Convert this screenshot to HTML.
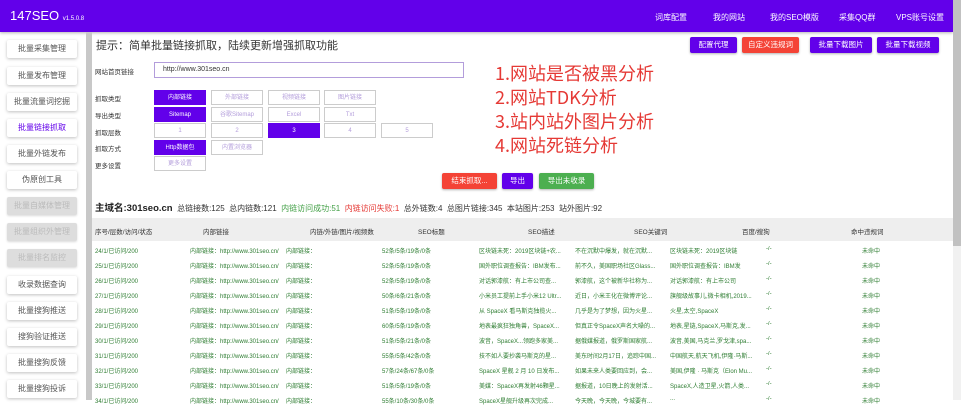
<!DOCTYPE html>
<html><head><meta charset="utf-8"><style>
*{margin:0;padding:0;box-sizing:border-box}
body{width:961px;height:400px;overflow:hidden;background:#fff;font-family:"Liberation Sans","Noto Sans CJK SC",sans-serif;position:relative;color:#333}
.a{position:absolute;white-space:nowrap}
.hd{left:0;top:0;width:953px;height:32px;background:#6200ea;box-shadow:0 1px 3px rgba(0,0,0,.3)}
.sb{left:953px;top:0;width:8px;height:400px;background:#f1f1f1}
.sbt{left:953px;top:0;width:8px;height:246px;background:#c1c1c1}
.nav{top:12px;color:#fff;font-size:8px}
.side{left:7px;width:70px;height:18px;background:#fff;box-shadow:0 1px 3px rgba(0,0,0,.25);font-size:8px;color:#555;text-align:center;line-height:18px;border-radius:2px}
.side.dis{background:#ddd;color:#bbb;box-shadow:0 1px 2px rgba(0,0,0,.15)}
.btn{height:16px;line-height:16px;font-size:7.5px;color:#fff;text-align:center;border-radius:2px;box-shadow:0 1px 2px rgba(0,0,0,.3)}
.p{background:#6200ea}.r{background:#f44336}.g{background:#4caf50}
.opt{height:15px;width:52px;line-height:14px;font-size:6px;text-align:center;border:1px solid #ccc;color:#b39ddb;background:#fff}
.opt.on{background:#6200ea;color:#fff;border-color:#6200ea}
.lbl{font-size:6.5px;color:#333;left:95px}
.red{color:#e53935;font-size:18px;left:495px;font-family:"Noto Sans CJK SC",sans-serif;line-height:24px}
.row{font-size:6px;color:#2e7d32;overflow:hidden}
.th{font-size:6.5px;color:#333;top:226px}
</style></head><body>
<div class="a hd"></div>
<div class="a" style="left:10px;top:8px;color:#fff;font-size:13px">147SEO <span style="font-size:6px">v1.5.0.8</span></div>
<div class="a nav" style="left:655px">词库配置</div>
<div class="a nav" style="left:713px">我的网站</div>
<div class="a nav" style="left:770px">我的SEO模版</div>
<div class="a nav" style="left:839px">采集QQ群</div>
<div class="a nav" style="left:896px">VPS账号设置</div>
<div class="a sb"></div><div class="a sbt"></div>
<div class="a" style="left:86px;top:32px;width:6px;height:368px;background:#c8c8c8"></div>

<div class="a side" style="top:40px">批量采集管理</div>
<div class="a side" style="top:67px">批量发布管理</div>
<div class="a side" style="top:93px;width:70px">批量流量词挖掘</div>
<div class="a side" style="top:119px;color:#6200ea">批量链接抓取</div>
<div class="a side" style="top:145px">批量外链发布</div>
<div class="a side" style="top:171px">伪原创工具</div>
<div class="a side dis" style="top:197px">批量自媒体管理</div>
<div class="a side dis" style="top:223px">批量组织外管理</div>
<div class="a side dis" style="top:249px">批量排名监控</div>
<div class="a side" style="top:276px">收录数据查询</div>
<div class="a side" style="top:302px">批量搜狗推送</div>
<div class="a side" style="top:328px">搜狗验证推送</div>
<div class="a side" style="top:354px">批量搜狗反馈</div>
<div class="a side" style="top:380px">批量搜狗投诉</div>

<div class="a" style="left:96px;top:37px;font-size:11px;color:#333">提示：简单批量链接抓取，陆续更新增强抓取功能</div>
<div class="a btn p" style="left:690px;top:37px;width:47px">配置代理</div>
<div class="a btn r" style="left:742px;top:37px;width:57px">自定义违规词</div>
<div class="a btn p" style="left:810px;top:37px;width:62px">批量下载图片</div>
<div class="a btn p" style="left:877px;top:37px;width:62px">批量下载视频</div>

<div class="a lbl" style="top:66px">网站首页链接</div>
<div class="a" style="left:154px;top:62px;width:310px;height:16px;border:1px solid #b39ddb;font-size:7px;line-height:14px;padding-left:8px">http://www.301seo.cn</div>

<div class="a lbl" style="top:93px">抓取类型</div>
<div class="a opt on" style="left:154px;top:90px">内部链接</div>
<div class="a opt" style="left:211px;top:90px">外部链接</div>
<div class="a opt" style="left:268px;top:90px">视频链接</div>
<div class="a opt" style="left:324px;top:90px">图片链接</div>
<div class="a lbl" style="top:110px">导出类型</div>
<div class="a opt on" style="left:154px;top:107px">Sitemap</div>
<div class="a opt" style="left:211px;top:107px">谷歌Sitemap</div>
<div class="a opt" style="left:268px;top:107px">Excel</div>
<div class="a opt" style="left:324px;top:107px">Txt</div>
<div class="a lbl" style="top:127px">抓取层数</div>
<div class="a opt" style="left:154px;top:123px">1</div>
<div class="a opt" style="left:211px;top:123px">2</div>
<div class="a opt on" style="left:268px;top:123px">3</div>
<div class="a opt" style="left:324px;top:123px">4</div>
<div class="a opt" style="left:381px;top:123px">5</div>
<div class="a lbl" style="top:143px">抓取方式</div>
<div class="a opt on" style="left:154px;top:140px">Http数据包</div>
<div class="a opt" style="left:211px;top:140px">内置浏览器</div>
<div class="a lbl" style="top:160px">更多设置</div>
<div class="a opt" style="left:154px;top:156px">更多设置</div>

<div class="a red" style="top:61px">1.网站是否被黑分析</div>
<div class="a red" style="top:85px">2.网站TDK分析</div>
<div class="a red" style="top:109px">3.站内站外图片分析</div>
<div class="a red" style="top:133px">4.网站死链分析</div>

<div class="a btn r" style="left:442px;top:173px;width:55px">结束抓取...</div>
<div class="a btn p" style="left:502px;top:173px;width:31px">导出</div>
<div class="a btn g" style="left:539px;top:173px;width:55px">导出未收录</div>

<div class="a" style="left:95px;top:200px;font-size:8px;color:#333"><b style="font-size:9.5px;color:#222">主域名:301seo.cn</b> &nbsp;总链接数:125 &nbsp;总内链数:121 &nbsp;<span style="color:#43a047">内链访问成功:51</span> &nbsp;<span style="color:#e53935">内链访问失败:1</span> &nbsp;总外链数:4 &nbsp;总图片链接:345 &nbsp;本站图片:253 &nbsp;站外图片:92</div>

<div class="a" style="left:92px;top:218px;width:861px;height:23px;background:#eee"></div>
<div class="a th" style="left:95px">序号/层数/访问/状态</div>
<div class="a th" style="left:203px">内部链接</div>
<div class="a th" style="left:310px">内链/外链/图片/视频数</div>
<div class="a th" style="left:418px">SEO标题</div>
<div class="a th" style="left:528px">SEO描述</div>
<div class="a th" style="left:634px">SEO关键词</div>
<div class="a th" style="left:742px">百度/搜狗</div>
<div class="a th" style="left:851px">命中违规词</div>

<div id="rows"></div>
<script>
var d=[["24","52条/5条/19条/0条","区块链未死：2019区块链+农...","不在沉默中爆发，就在沉默...","区块链未死：2019区块链"],
["25","52条/5条/19条/0条","国外职位调查报告：IBM发布...","前不久，美国职场社区Glass...","国外职位调查报告：IBM发"],
["26","52条/5条/19条/0条","对话郭漆航：有上市公司查...","郭漆航，这个被新华社称为...","对话郭漆航：有上市公司"],
["27","50条/6条/21条/0条","小米员工提前上手小米12 Ultr...","近日，小米王化在微博评论...","旗舰级故事儿,微卡相机,2019..."],
["28","51条/5条/19条/0条","从 SpaceX 看马斯克独揽火...","几乎是为了梦想，因为火星...","火星,太空,SpaceX"],
["29","60条/5条/19条/0条","地表最疯狂独角兽，SpaceX...","但真正令SpaceX声名大噪的...","地表,星链,SpaceX,马斯克,发..."],
["30","51条/5条/21条/0条","波音，SpaceX...领跑多家美...","据俄媒报道，俄罗斯国家航...","波音,美国,马克兰,罗戈津,spa..."],
["31","55条/5条/42条/0条","技不如人要抄袭马斯克的星...","美东时间2月17日，追踪中国...","中国航天,航天飞机,伊隆·马斯..."],
["32","57条/24条/67条/0条","SpaceX 星舰 2 月 10 日发布...","如果未来人类要回应到，会...","美国,伊隆 · 马斯克（Elon Mu..."],
["33","51条/5条/19条/0条","美媒：SpaceX再发射46颗星...","据报道，10日晚上的发射活...","SpaceX,人造卫星,火箭,人类..."],
["34","55条/10条/30条/0条","SpaceX星舰升级再次完成...","今天晚，今天晚，今城要有...","..."]];
var h="";d.forEach(function(r,i){var y=246+i*15;
function c(x,t,w){h+='<div class="a row" style="left:'+x+'px;top:'+y+'px;width:'+(w||90)+'px">'+t+'</div>'}
c(95,r[0]+"/1/已访问/200");c(190,"内部链接：http://www.301seo.cn/",93);c(286,"内部链接：");c(382,r[1]);c(479,r[2]);c(575,r[3]);c(670,r[4]);c(766,"-/-");c(862,"未命中");});
document.getElementById("rows").innerHTML=h;
</script>
</body></html>
